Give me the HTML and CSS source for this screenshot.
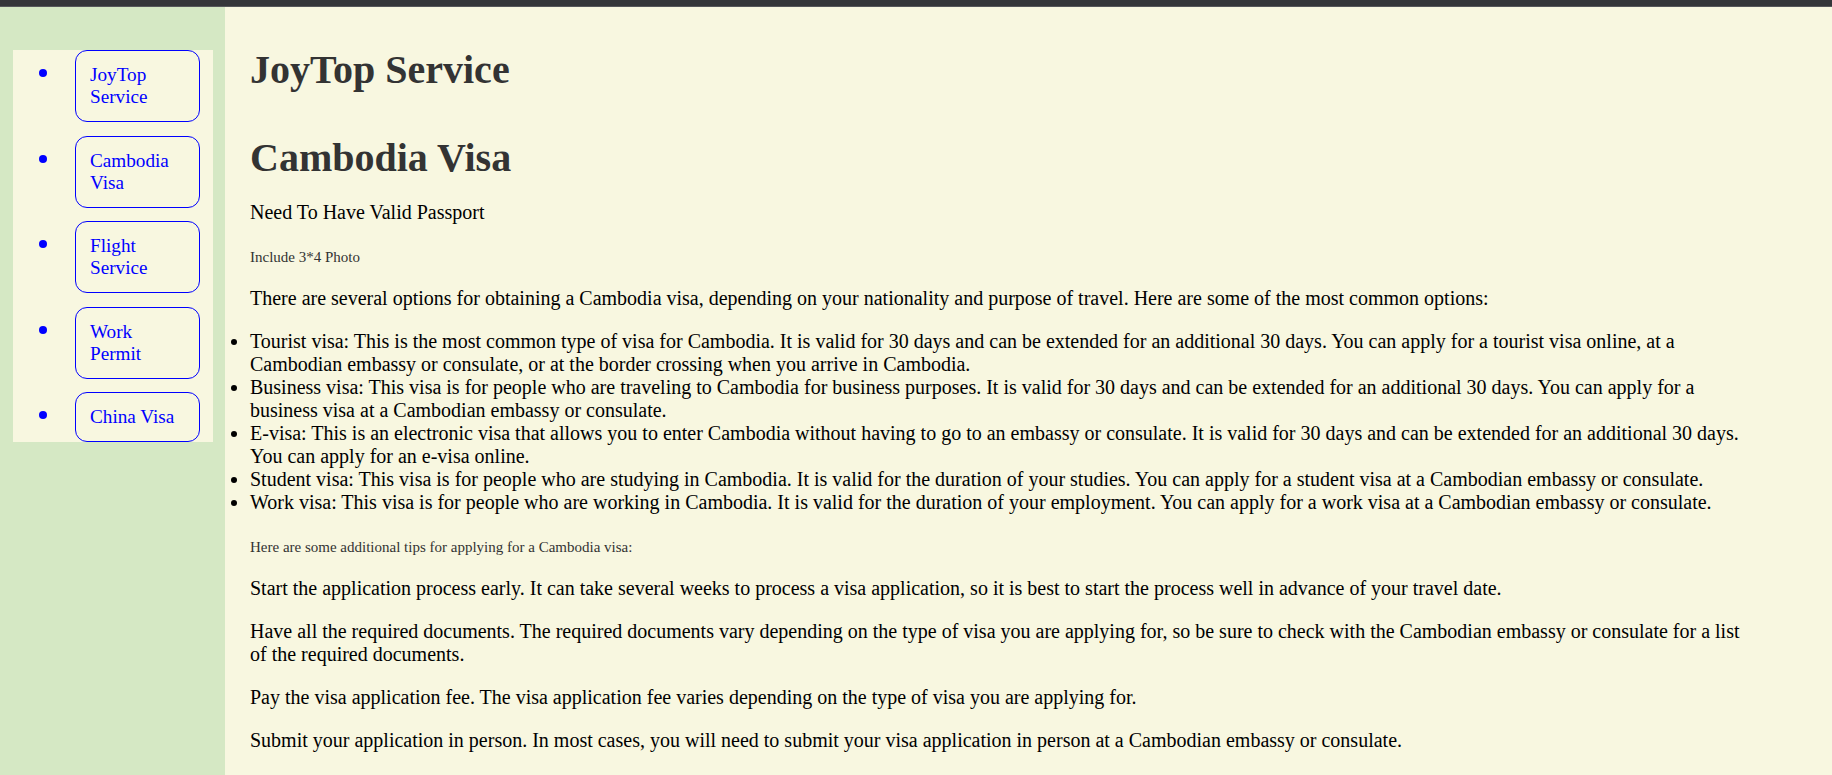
FILE: index.html
```html
<!DOCTYPE html>
<html lang="en">
<head>
<meta charset="utf-8">
<title>JoyTop Service - Cambodia Visa</title>
<link rel="stylesheet" href="styles.css">
</head>
<body>
<div class="topbar"></div>
<div class="layout">
  <aside class="sidebar">
    <ul class="nav">
      <li><a href="#">JoyTop Service</a></li>
      <li><a href="#">Cambodia Visa</a></li>
      <li><a href="#">Flight Service</a></li>
      <li><a href="#">Work Permit</a></li>
      <li><a href="#">China Visa</a></li>
    </ul>
  </aside>
  <main class="content">
    <h1 class="site-title">JoyTop Service</h1>
    <h1 class="page-title">Cambodia Visa</h1>
    <p>Need To Have Valid Passport</p>
    <p><span class="note">Include 3*4 Photo</span></p>
    <p>There are several options for obtaining a Cambodia visa, depending on your nationality and purpose of travel. Here are some of the most common options:</p>
    <ul class="options">
      <li>Tourist visa: This is the most common type of visa for Cambodia. It is valid for 30 days and can be extended for an additional 30 days. You can apply for a tourist visa online, at a Cambodian embassy or consulate, or at the border crossing when you arrive in Cambodia.</li>
      <li>Business visa: This visa is for people who are traveling to Cambodia for business purposes. It is valid for 30 days and can be extended for an additional 30 days. You can apply for a business visa at a Cambodian embassy or consulate.</li>
      <li>E-visa: This is an electronic visa that allows you to enter Cambodia without having to go to an embassy or consulate. It is valid for 30 days and can be extended for an additional 30 days. You can apply for an e-visa online.</li>
      <li>Student visa: This visa is for people who are studying in Cambodia. It is valid for the duration of your studies. You can apply for a student visa at a Cambodian embassy or consulate.</li>
      <li>Work visa: This visa is for people who are working in Cambodia. It is valid for the duration of your employment. You can apply for a work visa at a Cambodian embassy or consulate.</li>
    </ul>
    <p><span class="note">Here are some additional tips for applying for a Cambodia visa:</span></p>
    <p>Start the application process early. It can take several weeks to process a visa application, so it is best to start the process well in advance of your travel date.</p>
    <p>Have all the required documents. The required documents vary depending on the type of visa you are applying for, so be sure to check with the Cambodian embassy or consulate for a list of the required documents.</p>
    <p>Pay the visa application fee. The visa application fee varies depending on the type of visa you are applying for.</p>
    <p>Submit your application in person. In most cases, you will need to submit your visa application in person at a Cambodian embassy or consulate.</p>
  </main>
</div>
</body>
</html>
```

FILE: styles.css
```css
html, body {
  margin: 0;
  padding: 0;
}

body {
  font-family: "Liberation Serif", "Times New Roman", serif;
  background: #f8f7e0;
  color: #000;
}

.topbar {
  height: 6px;
  background: #35363a;
  border-bottom: 1px solid #56575b;
}

.layout {
  display: flex;
  min-height: calc(100vh - 7px);
}

.sidebar {
  flex: 0 0 200px;
  padding: 43px 12px 0 13px;
  background: #d5e8c4;
}

.nav {
  margin: 0;
  padding: 0 13px 0 49px;
  background: #f8f7e0;
  list-style: disc;
  color: #0000ff;
  font-size: 19.2px;
}

.nav li + li {
  margin-top: 13.5px;
}

.nav li::marker {
  font-size: 28px;
}

.nav a {
  display: block;
  margin-left: 13px;
  padding: 13px 13px 13px 14px;
  border: 1px solid #0000ff;
  border-radius: 12px;
  color: #0000ff;
  text-decoration: none;
  line-height: 22px;
}

.content {
  flex: 1;
  padding: 0 77px 0 25px;
  font-size: 20px;
}

.site-title,
.page-title {
  font-size: 40px;
  color: #333;
  font-weight: bold;
}

.site-title {
  margin: 39px 0 41px;
}

.page-title {
  margin: 0 0 20px;
}

.content p {
  margin: 20px 0;
}

.note {
  font-size: 15px;
  color: #333;
}

.options {
  margin: 20px 0;
  padding: 0;
}
```
